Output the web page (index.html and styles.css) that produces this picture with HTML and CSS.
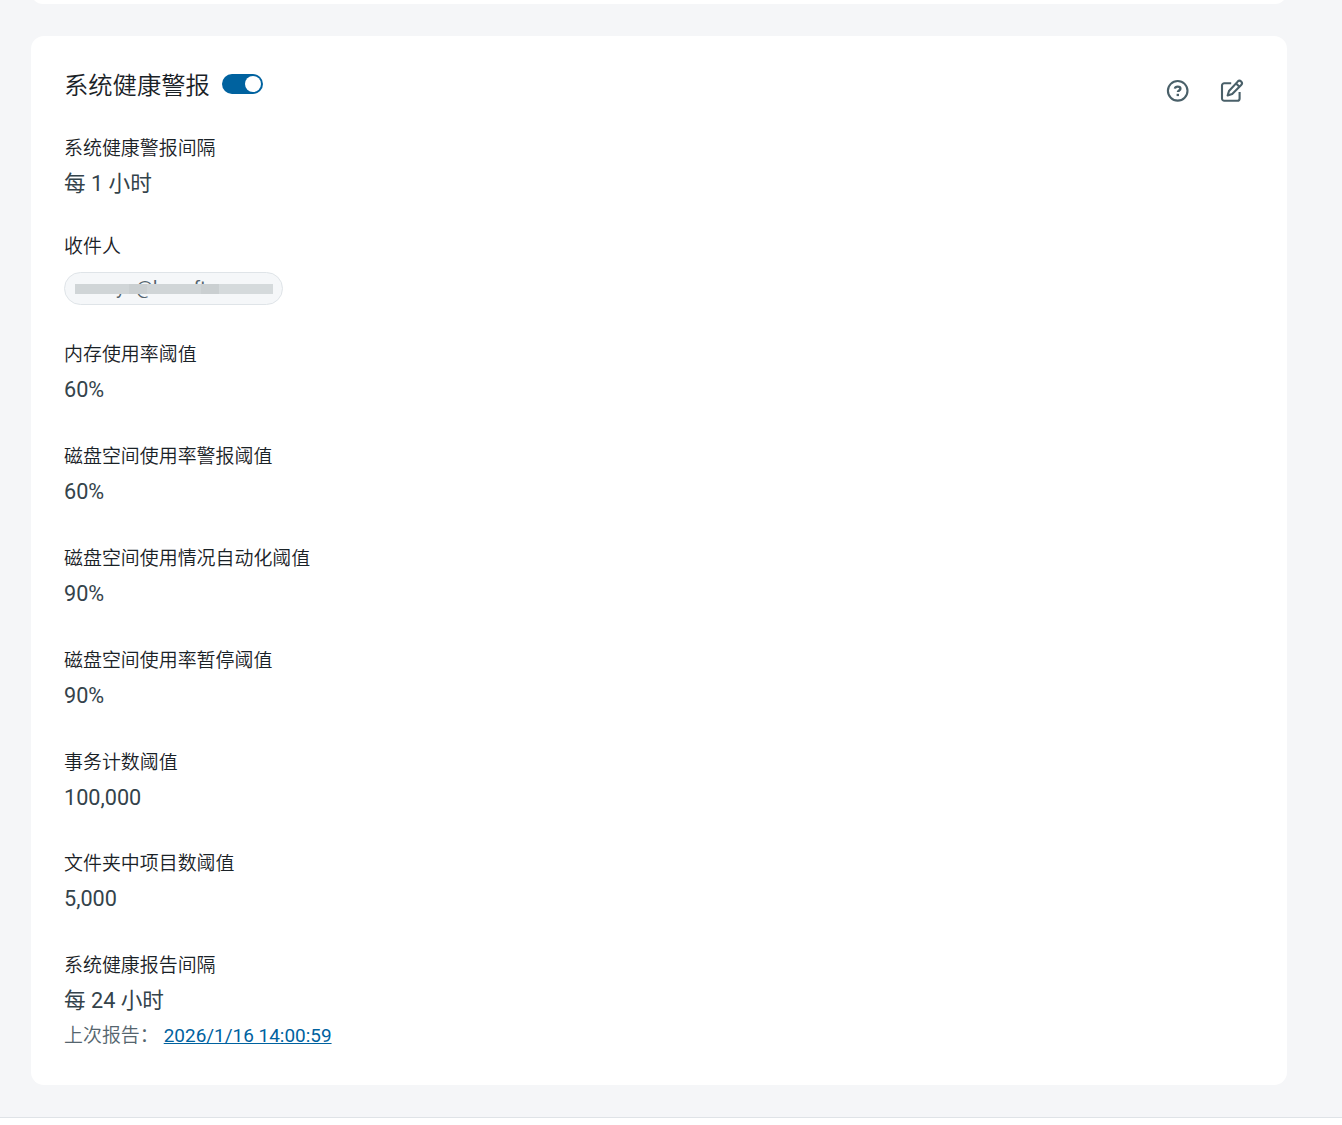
FILE: index.html
```html
<!DOCTYPE html>
<html lang="zh-CN">
<head>
  <meta charset="UTF-8" />
  <meta name="viewport" content="width=device-width, initial-scale=1.0"/>
  <title>系统健康警报</title>
  <link rel="stylesheet" href="styles.css">
</head>
<body>

  <main class="content">
    <section class="card card-prev"></section>

    <section class="card">
      <header class="card-header">
        <h2>系统健康警报</h2>
        <button type="button" class="toggle" role="switch" aria-checked="true"><span class="knob"></span></button>
        <div class="actions">
          <svg class="icon" viewBox="0 0 24 24">
            <circle cx="11.700" cy="11.800" r="9.800"/>
            <path class="bold" d="M8.900 9.600C9.100 8.200 10.200 7.600 11.700 7.600c1.600 0 2.700.8 2.700 2.100 0 1.700-2.500 1.800-2.500 3.400"/>
            <path class="bold" d="M11.800 14.800v2.300"/>
          </svg>
          <svg class="icon" viewBox="0 0 24 24">
            <path d="M11.200 4.200H4.300A2.300 2.300 0 0 0 2 6.500v13A2.300 2.300 0 0 0 4.300 21.800h13a2.300 2.300 0 0 0 2.300-2.300V13"/>
            <path d="M17.700 2.600a2.400 2.400 0 0 1 3.500 3.400L12.200 15l-4.600 1.500L9 12z"/>
            <path d="M16 4.400l3.500 3.400"/>
          </svg>
        </div>
      </header>

      <div class="field field-first">
        <div class="label">系统健康警报间隔</div>
        <div class="value">每 1 小时</div>
      </div>

      <div class="field field-recipients">
        <div class="label">收件人</div>
        <div class="chip">
          <span class="chip-text"><span>y</span><span>@h</span><span>ft</span></span>
          <span class="mask"><i></i><i></i><i></i><i></i><i></i><i></i><i></i><i></i><i></i><i></i><i></i></span>
        </div>
      </div>

      <div class="field">
        <div class="label">内存使用率阈值</div>
        <div class="value">60%</div>
      </div>

      <div class="field">
        <div class="label">磁盘空间使用率警报阈值</div>
        <div class="value">60%</div>
      </div>

      <div class="field">
        <div class="label">磁盘空间使用情况自动化阈值</div>
        <div class="value">90%</div>
      </div>

      <div class="field">
        <div class="label">磁盘空间使用率暂停阈值</div>
        <div class="value">90%</div>
      </div>

      <div class="field">
        <div class="label">事务计数阈值</div>
        <div class="value">100,000</div>
      </div>

      <div class="field">
        <div class="label">文件夹中项目数阈值</div>
        <div class="value">5,000</div>
      </div>

      <div class="field">
        <div class="label">系统健康报告间隔</div>
        <div class="value">每 24 小时</div>
        <div class="report"><span>上次报告：</span><a href="#">2026/1/16 14:00:59</a></div>
      </div>
    </section>
  </main>

</body>
</html>
```

FILE: styles.css
```css
* {
  box-sizing: border-box;
}

body {
  margin: 0;
  font-family: Roboto, "Noto Sans CJK SC", sans-serif;
  font-size: 18.95px;
  color: #1a2227;
  background: #fff;
}

.content {
  height: 1118px;
  padding: 0 55px 0 31px;
  background: #f5f6f8;
  border-bottom: 1px solid #dfe3e7;
  overflow: hidden;
}

.card {
  height: 1049px;
  padding: 32px 33px;
  background: #fff;
  border-radius: 13px;
}

.card-prev {
  height: 24px;
  padding: 0;
  margin-top: -20px;
  margin-bottom: 32px;
}

.card-header {
  display: flex;
  align-items: center;
  height: 34px;
}

h2 {
  margin: 0;
  padding-top: 2px;
  font-size: 24.3px;
  font-weight: 350;
  line-height: 34px;
}

.toggle {
  display: flex;
  justify-content: flex-end;
  align-items: center;
  width: 41px;
  height: 20px;
  margin: 0 0 2px 12px;
  padding: 0 2px;
  border: none;
  border-radius: 10px;
  background: #00629f;
}

.knob {
  width: 16px;
  height: 16px;
  border-radius: 50%;
  background: #fff;
}

.actions {
  display: flex;
  gap: 30px;
  margin: 12px 10px 0 auto;
}

.icon {
  width: 24px;
  height: 24px;
  fill: none;
  stroke: #4a6069;
  stroke-width: 2.1;
  stroke-linejoin: round;
}

.icon .bold {
  stroke-width: 2.4;
}

.field {
  height: 101.86px;
}

.field-first {
  height: 98px;
  margin-top: 29.1px;
}

.field-recipients {
  height: 108px;
}

.label {
  line-height: 35px;
  font-weight: 350;
}

.value {
  font-size: 21.65px;
  line-height: 35px;
  color: #34434b;
}

.chip {
  position: relative;
  width: 219px;
  height: 33px;
  margin-top: 8px;
  border: 1px solid #dfe4e8;
  border-radius: 17px;
  background: #f5f7f9;
}

.chip-text {
  display: flex;
  padding-left: 51px;
  line-height: 30px;
  color: #55656e;
}

.chip-text span + span {
  margin-left: 11px;
}

.chip-text span:last-child {
  margin-left: 30px;
}

/* redaction strip over the address */
.mask {
  position: absolute;
  left: 10px;
  top: 11px;
  display: flex;
  width: 198px;
  height: 10px;
}

.mask i {
  flex: 1;
  background: #d0d5d7;
}

.mask i:nth-child(4n) {
  background: #cacfd1;
}

.mask i:nth-child(n+9) {
  background: #d5dadc;
}

.report {
  display: flex;
  line-height: 36px;
  font-weight: 350;
  color: #55656e;
}

.report a {
  margin-left: 5px;
  font-weight: 400;
  color: #00629f;
}
```
